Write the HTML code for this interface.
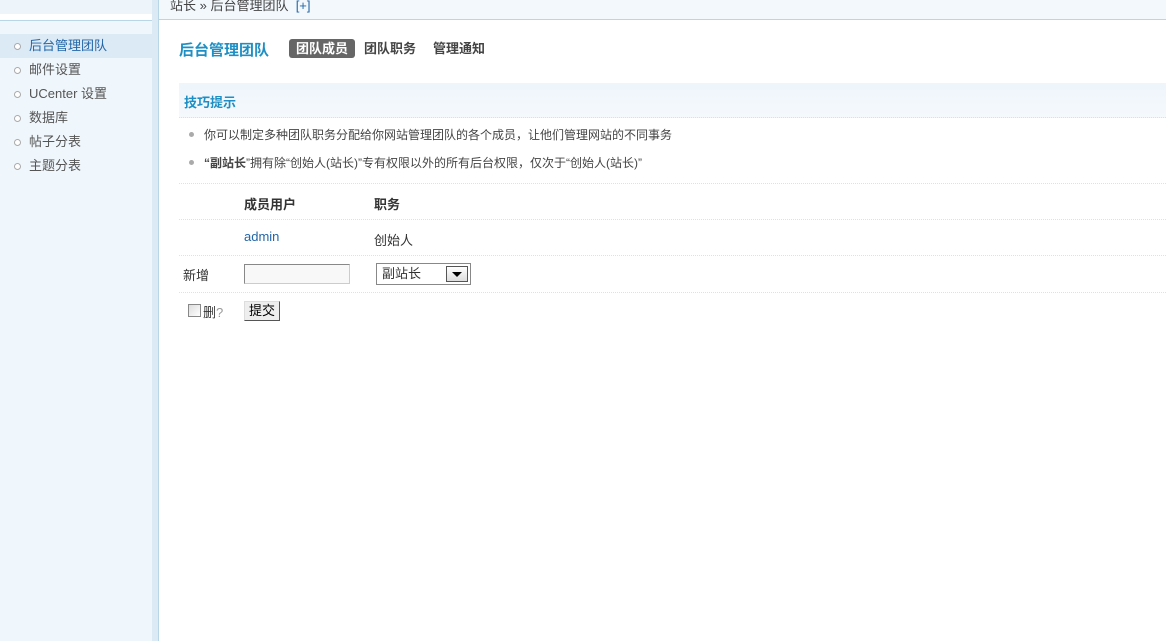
<!DOCTYPE html>
<html><head><meta charset="utf-8"><style>
*{margin:0;padding:0;box-sizing:border-box}
body{width:1166px;height:641px;overflow:hidden;background:#fff;font:12px "Liberation Sans","Noto Sans CJK SC","WenQuanYi Zen Hei",sans-serif;color:#333;position:relative}
#topl{position:absolute;left:0;top:0;width:152px;height:20px;background:linear-gradient(#eef5fa 0,#eef5fa 14px,#fff 14px)}
#topbar{position:absolute;left:159px;top:0;right:0;height:20px;background:#f2f8fc;border-bottom:1px solid #b9d6e6;padding-left:11px;line-height:12px;font-size:13px;color:#444}
#topbar span{color:#2366a8}
#tline{position:absolute;left:0;top:20px;width:159px;height:1px;background:#b9d6e6}
#side{position:absolute;left:0;top:21px;width:152px;bottom:0;background:#f0f7fc}
#strip{position:absolute;left:152px;top:0;width:6px;bottom:0;background:#dbeaf4}
#vline{position:absolute;left:158px;top:0;width:1px;bottom:0;background:#b9d6e6}
#side ul{list-style:none;margin-top:13px}
#side li{height:24px;line-height:24px;padding-left:29px;font-size:13px;color:#555;position:relative}
#side li:before{content:"";position:absolute;left:14px;top:9px;width:5px;height:5px;border:1px solid #aaa;border-radius:50%;background:#fff}
#side li.on{background:#dbeaf5;color:#2366a8}
#main{position:absolute;left:179px;top:0;right:0}
h1{position:absolute;top:39px;left:0;font-size:15px;color:#1e8fc4;font-weight:bold}
.tabs span{position:absolute;top:39px;font-size:13px;font-weight:bold;color:#444;height:19px;line-height:19px}
.tabs .cur{background:#666;color:#fff;border-radius:3px;width:66px;text-align:center}
.tip{position:absolute;top:83px;left:0;right:0;height:35px;background:linear-gradient(#eef5fb,#f5f9fc);border-bottom:1px dotted #dde;padding:9px 5px;font-weight:bold;color:#1e8fc4;font-size:13px}
.li{position:absolute;left:10px;font-size:12px;color:#444}
.li:before{content:"";display:inline-block;width:5px;height:5px;background:#aaa;border-radius:50%;margin-right:10px;vertical-align:2px}
.hr{position:absolute;left:0;right:0;height:0;border-top:1px dotted #d7e4ee}
.t{position:absolute;font-size:13px}
</style></head><body>
<div id="topl"></div>
<div id="topbar">站长 » 后台管理团队 &nbsp;<span>[+]</span></div>
<div id="tline"></div>
<div id="side"><ul>
<li class="on">后台管理团队</li><li>邮件设置</li><li>UCenter 设置</li><li>数据库</li><li>帖子分表</li><li>主题分表</li></ul></div>
<div id="strip"></div><div id="vline"></div>
<div id="main">
<h1>后台管理团队</h1>
<div class="tabs"><span class="cur" style="left:110px">团队成员</span><span style="left:185px">团队职务</span><span style="left:254px">管理通知</span></div>
<div class="tip">技巧提示</div>
<div class="li" style="top:126px">你可以制定多种团队职务分配给你网站管理团队的各个成员，让他们管理网站的不同事务</div>
<div class="li" style="top:154px"><b>“副站长</b>”拥有除“创始人(站长)”专有权限以外的所有后台权限，仅次于“创始人(站长)”</div>
<div class="hr" style="top:183px"></div>
<div class="t" style="left:65px;top:194px;font-weight:bold">成员用户</div>
<div class="t" style="left:195px;top:194px;font-weight:bold">职务</div>
<div class="hr" style="top:219px"></div>
<div class="t" style="left:65px;top:229px;color:#2366a8">admin</div>
<div class="t" style="left:195px;top:230px">创始人</div>
<div class="hr" style="top:255px"></div>
<div class="t" style="left:4px;top:265px">新增</div>
<div style="position:absolute;left:65px;top:264px;width:106px;height:20px;border:1px solid #999;border-color:#888 #ccc #ccc #888;background:#f8f8f8"></div>
<div style="position:absolute;left:197px;top:263px;width:95px;height:22px;border:1px solid #888;background:#fff;font-size:13px;line-height:20px;padding-left:5px">副站长
<div style="position:absolute;right:2px;top:2px;width:22px;height:16px;border:1px solid #555;background:linear-gradient(#fff,#ddd)"><div style="margin:5px auto 0;width:0;height:0;border-left:5px solid transparent;border-right:5px solid transparent;border-top:5px solid #000"></div></div></div>
<div class="hr" style="top:292px"></div>
<div style="position:absolute;left:9px;top:304px;width:13px;height:13px;border:1px solid #888;background:linear-gradient(135deg,#ddd,#fff)"></div>
<div class="t" style="left:24px;top:302px">删<span style="color:#999">?</span></div>
<div style="position:absolute;left:65px;top:301px;width:36px;height:20px;border:1px solid #666;border-color:#ddd #555 #555 #ddd;background:#eee;font-size:13px;text-align:center;line-height:18px;color:#000">提交</div>
</div>
</body></html>
